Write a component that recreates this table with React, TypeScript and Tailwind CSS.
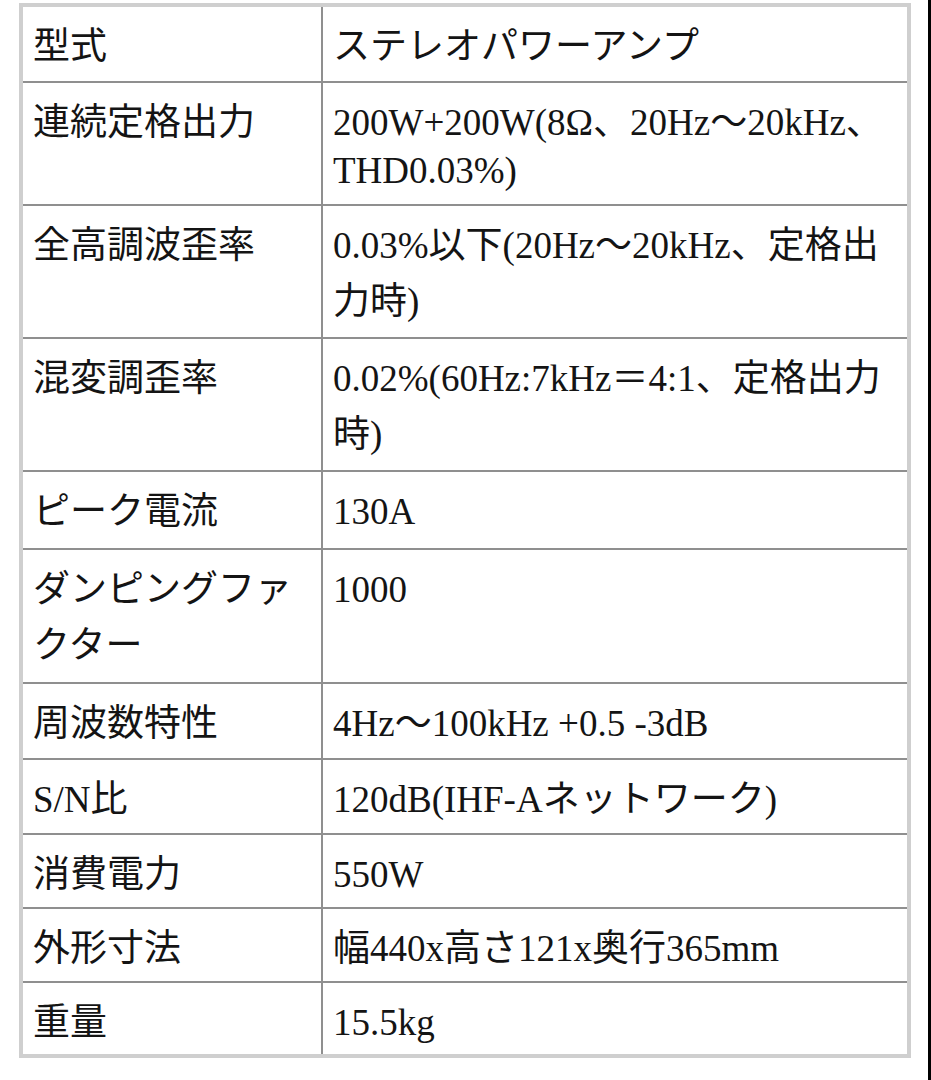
import React from 'react';

type Spec = {
  label: string;
  value: string;
  h: string;
  valueClass?: string;
};

// row heights are line-to-line distances measured off the reference
const specs: Spec[] = [
  { label: '型式', value: 'ステレオパワーアンプ', h: 'h-[74px]' },
  {
    label: '連続定格出力',
    value: '200W+200W(8Ω、20Hz〜20kHz、THD0.03%)',
    h: 'h-[123px]',
    valueClass: 'pt-[16px] leading-[48px]',
  },
  { label: '全高調波歪率', value: '0.03%以下(20Hz〜20kHz、定格出力時)', h: 'h-[133px]' },
  { label: '混変調歪率', value: '0.02%(60Hz:7kHz＝4:1、定格出力時)', h: 'h-[133px]' },
  { label: 'ピーク電流', value: '130A', h: 'h-[78px]' },
  { label: 'ダンピングファクター', value: '1000', h: 'h-[134px]' },
  { label: '周波数特性', value: '4Hz〜100kHz +0.5 -3dB', h: 'h-[76px]' },
  { label: 'S/N比', value: '120dB(IHF-Aネットワーク)', h: 'h-[75px]' },
  { label: '消費電力', value: '550W', h: 'h-[74px]' },
  { label: '外形寸法', value: '幅440x高さ121x奥行365mm', h: 'h-[74px]' },
  { label: '重量', value: '15.5kg', h: 'h-[73px]' },
];

const App: React.FC = () => {
  return (
    <div
      className="flex h-[1080px] w-full bg-white text-[#141414] text-[37px]"
      style={{ fontFamily: '"Liberation Serif", "Noto Sans CJK JP", serif' }}
    >
      <div className="flex-1 pt-[3px] pl-[19px]">
        {/* Spec table */}
        <div className="w-[892px] border-4 border-[#cfcfcf]">
          {specs.map((spec, i) => (
            <div
              key={spec.label}
              className={`flex ${spec.h} ${i > 0 ? 'border-t-2 border-[#8f8f8f]' : ''}`}
            >
              <div className="w-[300px] shrink-0 border-r-2 border-[#8f8f8f] px-[10px] pt-[12px] leading-[56px]">
                {spec.label}
              </div>
              <div
                className={`flex-1 px-[10px] ${spec.valueClass ?? 'pt-[12px] leading-[56px]'}`}
              >
                {spec.value}
              </div>
            </div>
          ))}
        </div>
      </div>
      <div className="w-[3px] bg-black" />
    </div>
  );
};

export default App;
